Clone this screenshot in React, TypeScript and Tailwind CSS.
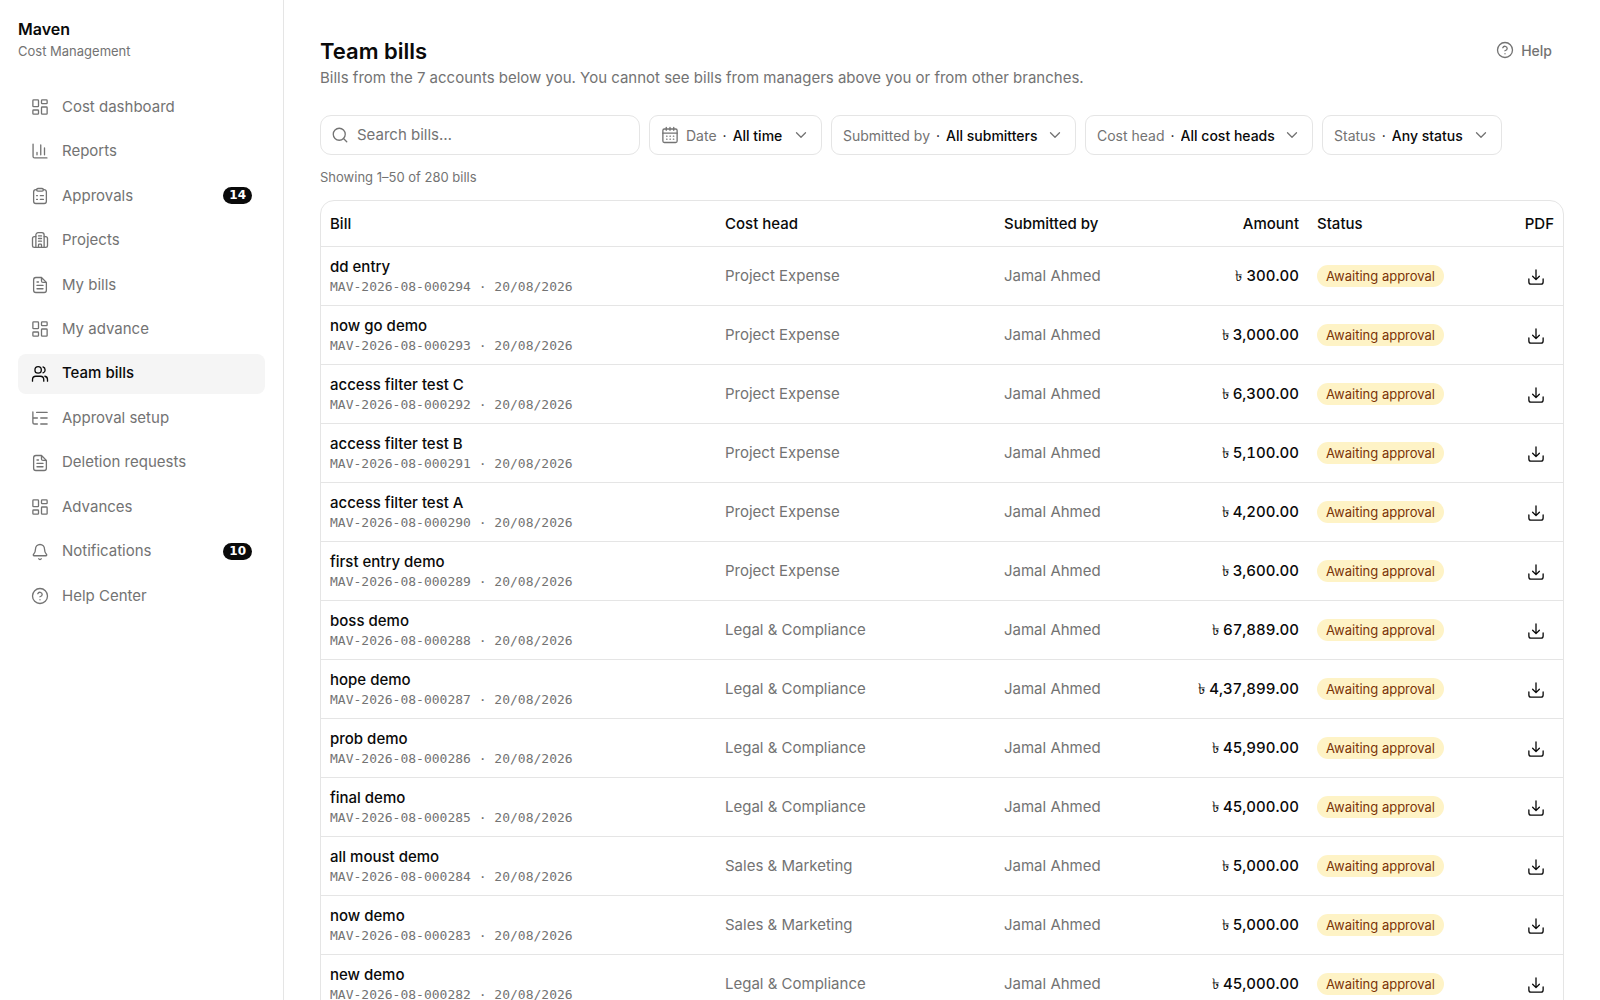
import React, { useState } from 'react';
import { Bell, ChevronDown, CircleHelp, Search } from 'lucide-react';

type IconProps = { className?: string };

const Svg: React.FC<IconProps & { children: React.ReactNode }> = ({ className, children }) => (
  <svg
    viewBox="0 0 24 24"
    fill="none"
    stroke="currentColor"
    strokeWidth="1.75"
    strokeLinecap="round"
    strokeLinejoin="round"
    className={className}
    aria-hidden="true"
  >
    {children}
  </svg>
);

const DashboardIcon: React.FC<IconProps> = (p) => (
  <Svg {...p}>
    <rect x="2.5" y="2.5" width="7.5" height="9" rx="1" />
    <rect x="14" y="2.5" width="7.5" height="5" rx="1" />
    <rect x="2.5" y="16" width="7.5" height="5.5" rx="1" />
    <rect x="14" y="12" width="7.5" height="9.5" rx="1" />
  </Svg>
);

const ReportIcon: React.FC<IconProps> = (p) => (
  <Svg {...p}>
    <path d="M2.75 2.75v16.5a2 2 0 0 0 2 2h16.5" />
    <path d="M8 14v3M13 4v13M18 8v9" />
  </Svg>
);

const ApprovalIcon: React.FC<IconProps> = (p) => (
  <Svg {...p}>
    <path d="M7.5 3.5h-1a3 3 0 0 0-3 3V19a3 3 0 0 0 3 3h11a3 3 0 0 0 3-3V6.5a3 3 0 0 0-3-3h-1" />
    <rect x="7.5" y="2" width="9" height="3.5" rx="1.75" />
    <path d="M7.5 11.5h1M7.5 16.5h1M12.5 11.5h4M12.5 16.5h4" />
  </Svg>
);

const BuildingIcon: React.FC<IconProps> = (p) => (
  <Svg {...p}>
    <path d="M6.5 21.75V5.25a3 3 0 0 1 3-3h5a3 3 0 0 1 3 3v16.5" />
    <path d="M6.5 7.5h-2A2.5 2.5 0 0 0 2 10v9.25a2.5 2.5 0 0 0 2.5 2.5h15a2.5 2.5 0 0 0 2.5-2.5V10a2.5 2.5 0 0 0-2.5-2.5h-2" />
    <path d="M10 6.5h4M10 10h4M10 13.5h4M10 21.75V18.5a1 1 0 0 1 1-1h2a1 1 0 0 1 1 1v3.25" />
  </Svg>
);

const FileIcon: React.FC<IconProps> = (p) => (
  <Svg {...p}>
    <path d="M14 2H6.5a3 3 0 0 0-3 3v14a3 3 0 0 0 3 3h11a3 3 0 0 0 3-3V8.5L14 2v4.5a2 2 0 0 0 2 2h4.5" />
    <path d="M8 8h2M8 12.5h8M8 17h8" />
  </Svg>
);

const UsersIcon: React.FC<IconProps> = (p) => (
  <Svg {...p}>
    <circle cx="9.5" cy="6.5" r="4.25" />
    <path d="M2 21.5v-2A4.5 4.5 0 0 1 6.500 15h6a4.5 4.5 0 0 1 4.5 4.5v2" />
    <path d="M16 2.5a4.25 4.25 0 0 1 0 8M18.5 15a4.5 4.5 0 0 1 3.5 4.5v2" />
  </Svg>
);

const TreeIcon: React.FC<IconProps> = (p) => (
  <Svg {...p}>
    <path d="M2.5 4v13.5A2.5 2.5 0 0 0 5 20h3.5M2.5 12h6M7.5 4.5h14M13 12h8.5M13 20h8.5" />
  </Svg>
);

const CalendarIcon: React.FC<IconProps> = (p) => (
  <Svg {...p}>
    <rect x="2.5" y="4" width="19" height="18" rx="2" />
    <path d="M2.5 9.5h19M7 1.75v4M12 1.75v4M17 1.75v4" />
    <path d="M7.5 13.5h.5M12 13.5h.5M16.5 13.5h.5M7.5 17.5h.5M12 17.5h.5M16.5 17.5h.5" />
  </Svg>
);

const DownloadIcon: React.FC<IconProps> = (p) => (
  <Svg {...p}>
    <path d="M12 2.5V15M7.5 11l4.5 4.5 4.5-4.5" />
    <path d="M2.5 14.5v4a3 3 0 0 0 3 3h13a3 3 0 0 0 3-3v-4" />
  </Svg>
);

const navItems = [
  { label: 'Cost dashboard', icon: DashboardIcon },
  { label: 'Reports', icon: ReportIcon },
  { label: 'Approvals', icon: ApprovalIcon, count: 14 },
  { label: 'Projects', icon: BuildingIcon },
  { label: 'My bills', icon: FileIcon },
  { label: 'My advance', icon: DashboardIcon },
  { label: 'Team bills', icon: UsersIcon, active: true },
  { label: 'Approval setup', icon: TreeIcon },
  { label: 'Deletion requests', icon: FileIcon },
  { label: 'Advances', icon: DashboardIcon },
  { label: 'Notifications', icon: Bell, count: 10 },
  { label: 'Help Center', icon: CircleHelp },
];

const filters = [
  { id: 'submitter', label: 'Submitted by', value: 'All submitters', width: 'w-[245px]' },
  { id: 'cost-head', label: 'Cost head', value: 'All cost heads', width: 'w-[228px]' },
  { id: 'status', label: 'Status', value: 'Any status', width: 'w-[180px]' },
];

const bills = [
  { title: 'dd entry', no: '000294', head: 'Project Expense', amount: '300.00' },
  { title: 'now go demo', no: '000293', head: 'Project Expense', amount: '3,000.00' },
  { title: 'access filter test C', no: '000292', head: 'Project Expense', amount: '6,300.00' },
  { title: 'access filter test B', no: '000291', head: 'Project Expense', amount: '5,100.00' },
  { title: 'access filter test A', no: '000290', head: 'Project Expense', amount: '4,200.00' },
  { title: 'first entry demo', no: '000289', head: 'Project Expense', amount: '3,600.00' },
  { title: 'boss demo', no: '000288', head: 'Legal & Compliance', amount: '67,889.00' },
  { title: 'hope demo', no: '000287', head: 'Legal & Compliance', amount: '4,37,899.00' },
  { title: 'prob demo', no: '000286', head: 'Legal & Compliance', amount: '45,990.00' },
  { title: 'final demo', no: '000285', head: 'Legal & Compliance', amount: '45,000.00' },
  { title: 'all moust demo', no: '000284', head: 'Sales & Marketing', amount: '5,000.00' },
  { title: 'now demo', no: '000283', head: 'Sales & Marketing', amount: '5,000.00' },
  { title: 'new demo', no: '000282', head: 'Legal & Compliance', amount: '45,000.00' },
];

const Sidebar: React.FC = () => (
  <aside className="flex w-[284px] shrink-0 flex-col border-r border-neutral-200 px-[18px] pt-[18px]">
    <div className="text-[16px] leading-[22px] font-semibold">Maven</div>
    <div className="text-[13px] leading-[22px] text-neutral-500">Cost Management</div>
    {/* 12 entries spread evenly over the menu height */}
    <nav className="mt-[25px] flex h-[529px] flex-col justify-between">
      {navItems.map(({ label, icon: Icon, count, active }) => (
        <a
          key={label}
          href="#"
          className={`flex h-10 items-center gap-[13px] rounded-lg px-[13px] text-[15px] ${active
            ? 'bg-neutral-100 font-medium text-neutral-950'
            : 'text-neutral-500 hover:bg-neutral-50'
            }`}
        >
          <Icon className="size-[18px] stroke-[1.75]" />
          {label}
          {count && (
            <span className="ml-auto rounded-full bg-neutral-950 px-[6px] font-['DejaVu_Sans',sans-serif] text-[12px] leading-[17px] font-bold text-white">
              {count}
            </span>
          )}
        </a>
      ))}
    </nav>
  </aside>
);

const BillsTable: React.FC = () => (
  <div className="mt-[13px] overflow-hidden rounded-[14px] border border-neutral-200">
    <table className="w-full table-fixed text-left text-[15px]">
      <colgroup>
        <col />
        <col className="w-[279px]" />
        <col className="w-[166px]" />
        <col className="w-[147px]" />
        <col className="w-[201px]" />
        <col className="w-[54px]" />
      </colgroup>
      <thead>
        <tr className="h-[45px] border-b border-neutral-200 [&>th]:px-[9px] [&>th]:pt-0.5 [&>th]:font-medium">
          <th>Bill</th>
          <th>Cost head</th>
          <th>Submitted by</th>
          <th className="text-right">Amount</th>
          <th>Status</th>
          <th className="text-right">PDF</th>
        </tr>
      </thead>
      <tbody>
        {bills.map(b => (
          <tr key={b.no} className="h-[59px] border-b border-neutral-200 [&>td]:px-[9px] [&>td]:pt-0.5">
            <td>
              <div className="leading-5 font-medium">{b.title}</div>
              <div className="font-['DejaVu_Sans_Mono',monospace] text-[13px] leading-5 text-neutral-500">
                MAV-2026-08-{b.no} · 20/08/2026
              </div>
            </td>
            <td className="text-neutral-500">{b.head}</td>
            <td className="text-neutral-500">Jamal Ahmed</td>
            <td className="text-right font-medium tabular-nums">৳ {b.amount}</td>
            <td>
              <span className="inline-block rounded-full bg-amber-100 px-[9px] text-[13px] leading-[22px] text-amber-900">
                Awaiting approval
              </span>
            </td>
            <td>
              <button aria-label={`Download ${b.title}`} className="flex w-full justify-center">
                <DownloadIcon className="size-[18px]" />
              </button>
            </td>
          </tr>
        ))}
      </tbody>
    </table>
  </div>
);

const App: React.FC = () => {
  const [query, setQuery] = useState('');

  return (
    <div className="flex h-screen overflow-hidden bg-white font-['Inter',sans-serif] text-neutral-950">
      <Sidebar />
      <main className="min-w-0 flex-1 overflow-hidden px-9 pt-9">
        <header className="flex items-start justify-between">
          <div>
            <h1 className="text-[22px] leading-[30px] font-semibold">Team bills</h1>
            <p className="text-[15px] leading-6 text-neutral-500">
              Bills from the 7 accounts below you. You cannot see bills from managers above you or from other branches.
            </p>
          </div>
          <button className="flex h-7 items-center gap-[7px] px-3 text-[14px] font-medium text-neutral-500">
            <CircleHelp className="size-[18px] stroke-[1.75]" />
            Help
          </button>
        </header>

        <div className="mt-[25px] flex flex-wrap gap-[9px]">
          <label className="flex h-10 w-80 items-center gap-2 rounded-[11px] border border-neutral-200 px-[10px] text-neutral-500">
            <Search className="size-[18px] stroke-[1.75]" />
            <input
              type="text"
              aria-label="Search bills"
              placeholder="Search bills…"
              value={query}
              onChange={(e) => setQuery(e.target.value)}
              className="min-w-0 flex-1 text-[15px] outline-none placeholder:text-neutral-500"
            />
          </label>
          <button className="flex h-10 w-[173px] items-center rounded-[9px] border border-neutral-200 px-[11px] text-[14px]">
            <CalendarIcon className="mr-[7px] size-[18px] text-neutral-500" />
            <span className="text-neutral-500">Date</span>
            <span className="mx-[6px]">·</span>
            <span className="font-medium">All time</span>
            <ChevronDown className="ml-auto size-[18px] stroke-[1.75] text-neutral-500" />
          </button>
          {filters.map(f => (
            <label
              key={f.id}
              className={`flex h-10 items-center rounded-[9px] border border-neutral-200 px-[11px] text-[14px] ${f.width}`}
            >
              <span className="shrink-0 text-neutral-500">{f.label}</span>
              <span className="mx-[6px]">·</span>
              <select className="min-w-0 flex-1 appearance-none bg-transparent font-medium outline-none">
                <option>{f.value}</option>
              </select>
              <ChevronDown className="size-[18px] shrink-0 stroke-[1.75] text-neutral-500" />
            </label>
          ))}
        </div>

        <p className="mt-3 text-[13px] leading-5 text-neutral-500">Showing 1–50 of 280 bills</p>
        <BillsTable />
      </main>
    </div>
  );
};

export default App;
